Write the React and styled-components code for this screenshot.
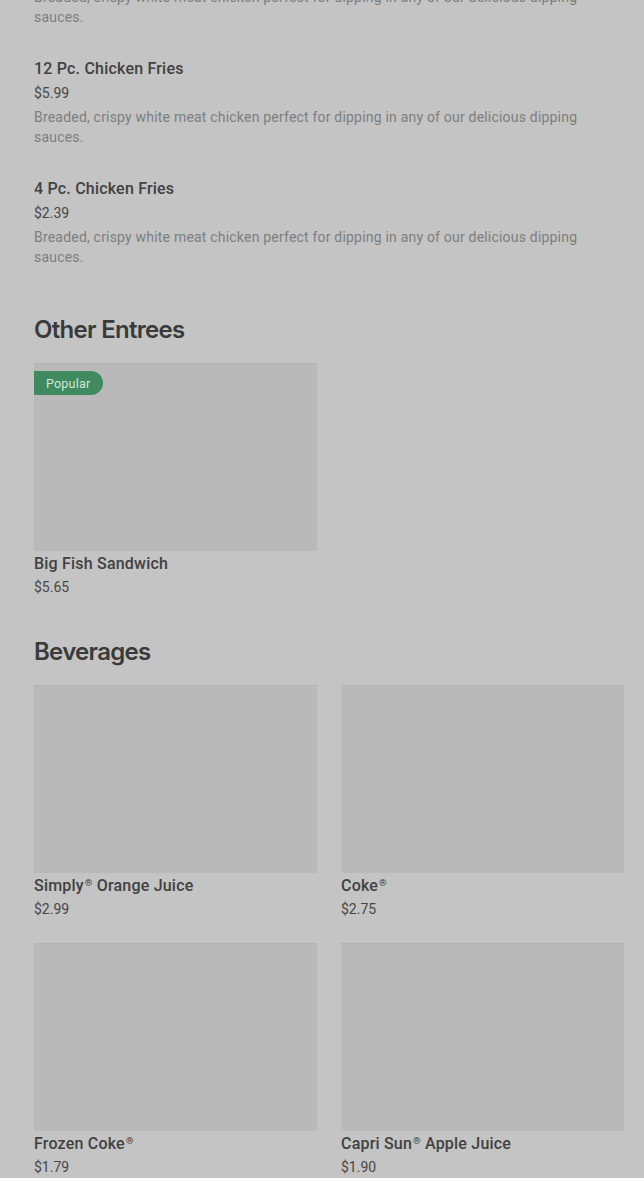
import React from "react";
import styled, { createGlobalStyle } from "styled-components";

const GlobalStyle = createGlobalStyle`
    html, body {
        margin: 0;
        padding: 0;
        background: #c4c4c4;
    }
    body {
        font-family: Roboto, "Liberation Sans", sans-serif;
        -webkit-font-smoothing: antialiased;
    }
`;

const Page = styled.div`
    padding: 0 20px 0 34px;
    overflow: hidden;
    height: 1178px;
    box-sizing: border-box;
`;

const ItemList = styled.ul`
    margin: 0;
    padding: 0;
    list-style: none;
`;

const ListItem = styled.li`
    padding-bottom: 29px;
`;

const ItemTitle = styled.div`
    font-size: 16px;
    line-height: 24px;
    font-weight: 500;
    letter-spacing: 0.2px;
    color: #414141;
    margin-top: 1px;
`;

const ItemPrice = styled.div`
    font-size: 14px;
    line-height: 20px;
    color: #474747;
    margin-top: ${props => props.tight ? "1px" : "2px"};
`;

const ItemDesc = styled.p`
    margin: ${props => props.cut ? "-13px" : "4px"} 0 0;
    font-size: 14px;
    line-height: 20px;
    letter-spacing: 0.2px;
    color: #7e7e7e;
`;

const SectionTitle = styled.h2`
    margin: ${props => props.first ? "18px" : "39px"} 0 17px;
    font-family: Inter, Roboto, sans-serif;
    font-size: 24px;
    line-height: 32px;
    font-weight: 600;
    letter-spacing: -0.7px;
    color: #3a3a3a;
`;

const CardGrid = styled.div`
    display: grid;
    grid-template-columns: 283px 283px;
    column-gap: 24px;
    row-gap: 24px;
`;

const Card = styled.div`
    display: flex;
    flex-direction: column;
`;

const CardImage = styled.div`
    position: relative;
    height: 188px;
    background: #b9b9b9;
    box-shadow: inset 0 1px 0 #b3b3b3;
`;

const Badge = styled.span`
    position: absolute;
    top: 8px;
    left: 0;
    height: 24px;
    padding: 0 13px 0 12px;
    display: flex;
    align-items: center;
    border-radius: 0 12px 12px 0;
    background: #3f8a5f;
    color: #d5e6da;
    font-size: 12.5px;
    letter-spacing: 0.2px;
`;

const CardName = styled.div`
    margin-top: 1px;
    font-size: 16px;
    line-height: 24px;
    font-weight: 500;
    letter-spacing: 0.2px;
    color: #414141;
`;

const Reg = styled.span`
    font-size: 0.6em;
    vertical-align: 0.5em;
    line-height: 0;
    margin-left: 1px;
`;

const DESC = "Breaded, crispy white meat chicken perfect for dipping in any of our delicious dipping sauces.";

const fries = [
    { name: "12 Pc. Chicken Fries", price: "$5.99" },
    { name: "4 Pc. Chicken Fries", price: "$2.39" },
];

const drinks = [
    { name: "Simply® Orange Juice", price: "$2.99" },
    { name: "Coke®", price: "$2.75" },
    { name: "Frozen Coke®", price: "$1.79" },
    { name: "Capri Sun® Apple Juice", price: "$1.90" },
];

// render ® as a small raised mark, like the menu does
const withReg = name => name.split("®").flatMap((part, i, arr) =>
    i < arr.length - 1 ? [part, <Reg key={i}>®</Reg>] : [part]
);

const MenuCard = ({ item }) => (
    <Card>
        <CardImage>{item.popular ? <Badge>Popular</Badge> : null}</CardImage>
        <CardName>{withReg(item.name)}</CardName>
        <ItemPrice tight>{item.price}</ItemPrice>
    </Card>
);

export default function App() {
    return (
        <Page>
            <GlobalStyle />
            <ItemList>
                <ListItem>
                    <ItemDesc cut>{DESC}</ItemDesc>
                </ListItem>
                {fries.map(f => (
                    <ListItem key={f.name}>
                        <ItemTitle>{f.name}</ItemTitle>
                        <ItemPrice>{f.price}</ItemPrice>
                        <ItemDesc>{DESC}</ItemDesc>
                    </ListItem>
                ))}
            </ItemList>

            <SectionTitle first>Other Entrees</SectionTitle>
            <CardGrid>
                <MenuCard item={{ name: "Big Fish Sandwich", price: "$5.65", popular: true }} />
            </CardGrid>

            <SectionTitle>Beverages</SectionTitle>
            <CardGrid>
                {drinks.map(d => <MenuCard key={d.name} item={d} />)}
            </CardGrid>
        </Page>
    );
}
